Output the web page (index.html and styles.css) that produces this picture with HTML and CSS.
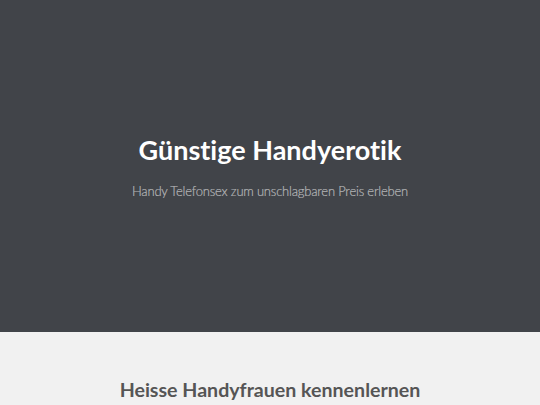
FILE: index.html
```html
<!DOCTYPE html>
<html lang="de">
<head>
    <meta charset="UTF-8">
    <meta name="viewport" content="width=device-width, initial-scale=1.0">
    <title>Günstige Handyerotik</title>
    <link rel="stylesheet" href="styles.css">
</head>
<body>
    <header class="hero">
        <h1>Günstige Handyerotik</h1>
        <p class="lead">Handy Telefonsex zum unschlagbaren Preis erleben</p>
    </header>
    <section class="girls">
        <h2>Heisse Handyfrauen kennenlernen</h2>
    </section>
</body>
</html>
```

FILE: styles.css
```css
body {
    margin: 0;
    font-family: Lato, "Open Sans", sans-serif;
    font-variant-ligatures: none;
    background: #f1f1f1;
}
.hero {
    background: #414449;
    height: 332px;
    display: flex;
    flex-direction: column;
    justify-content: center;
    align-items: center;
    text-align: center;
}
.hero h1 {
    margin: 0;
    font-size: 27px;
    font-weight: 700;
    color: #fff;
}
.lead {
    margin: 17px 0 0;
    font-size: 13px;
    font-weight: 300;
    letter-spacing: -0.2px;
    color: #b4b5b7;
    -webkit-text-stroke: 0.2px #b4b5b7;
}
.girls {
    padding: 46px 20px 40px;
    text-align: center;
}
.girls h2 {
    margin: 0;
    font-size: 19.6px;
    font-weight: 700;
    color: #555;
}
```
